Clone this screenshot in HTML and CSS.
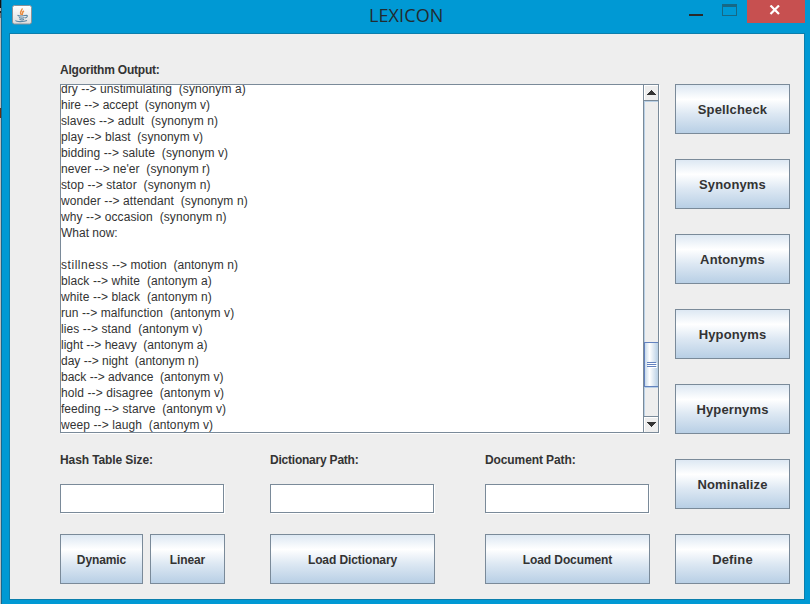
FILE: index.html
```html
<!DOCTYPE html>
<html lang="en">
<head>
<meta charset="utf-8">
<title>LEXICON</title>
<link rel="stylesheet" href="styles.css">
</head>
<body>
<div class="window">
  <header class="titlebar">
    <svg class="app-icon" width="20" height="20" viewBox="0 0 20 20">
      <defs><linearGradient id="tile" x2="0" y2="1"><stop stop-color="#fff"/><stop offset="1" stop-color="#dcdcdc"/></linearGradient></defs>
      <rect x=".5" y=".5" width="19" height="18.500" rx="2" fill="url(#tile)" stroke="#8a9298"/>
      <path d="M10 3.300C11 5 6.500 6.500 9.500 10M12 6C9 7.500 11.500 8.500 10 10" fill="none" stroke="#e78a3e" stroke-width="1.400"/>
      <path d="M5.500 10.300C7 11.300 11 11.300 13.500 10.300M7 12.400C8.500 13.200 11 13.200 12.500 12.400M7.500 14.300C9 15 11 15 12 14.300M13.500 10.500C16.500 9.800 15.500 12.500 13 13M4 15.300C3 17 12 17 15 15.500" fill="none" stroke="#5b87a5" stroke-width="1.100"/>
    </svg>
    <h1 class="title">LEXICON</h1>
    <div class="controls">
      <span class="minimize"></span>
      <span class="maximize"></span>
      <span class="close"><svg width="12" height="10" viewBox="0 0 12 10"><path d="M1.500 .5 10 9M10 .5 1.500 9" stroke="#fff" stroke-width="2.200"/></svg></span>
    </div>
  </header>
  <main class="client">
    <section class="left">
      <div class="label tight">Algorithm Output:</div>
      <div class="output">
        <div class="lines">
          <p class="wide">dry --&gt; unstimulating  (synonym a)</p>
          <p>hire --&gt; accept  (synonym v)</p>
          <p class="wide">slaves --&gt; adult  (synonym n)</p>
          <p class="mid">play --&gt; blast  (synonym v)</p>
          <p class="wide">bidding --&gt; salute  (synonym v)</p>
          <p class="mid">never --&gt; ne'er  (synonym r)</p>
          <p class="wide">stop --&gt; stator  (synonym n)</p>
          <p class="wide">wonder --&gt; attendant  (synonym n)</p>
          <p class="wide">why --&gt; occasion  (synonym n)</p>
          <p>What now:</p>
          <p></p>
          <p class="mid"><span class="stretch">stillness</span> --&gt; motion  (antonym n)</p>
          <p class="wide">black --&gt; white  (antonym a)</p>
          <p class="wide">white --&gt; black  (antonym n)</p>
          <p class="wide">run --&gt; malfunction  (antonym v)</p>
          <p class="wide">lies --&gt; stand  (antonym v)</p>
          <p>light --&gt; heavy  (antonym a)</p>
          <p>day --&gt; night  (antonym n)</p>
          <p>back --&gt; advance  (antonym v)</p>
          <p class="wide">hold --&gt; disagree  (antonym v)</p>
          <p class="mid">feeding --&gt; starve  (antonym v)</p>
          <p class="wide">weep --&gt; laugh  (antonym v)</p>
        </div>
        <div class="scrollbar">
          <div class="arrow up"><svg width="10" height="5" shape-rendering="crispEdges"><path d="M0 5 5 0 10 5Z" fill="#333"/></svg></div>
          <div class="track"><div class="thumb"><i></i><i></i><i></i></div></div>
          <div class="arrow down"><svg width="10" height="5" shape-rendering="crispEdges"><path d="M0 0 5 5 10 0Z" fill="#333"/></svg></div>
        </div>
      </div>
      <div class="form">
        <div class="group">
          <div class="label snug">Hash Table Size:</div>
          <input class="field" type="text" aria-label="Hash Table Size">
          <div class="pair"><button class="dynamic">Dynamic</button><button class="linear">Linear</button></div>
        </div>
        <div class="group">
          <div class="label tight">Dictionary Path:</div>
          <input class="field" type="text" aria-label="Dictionary Path">
          <button>Load Dictionary</button>
        </div>
        <div class="group">
          <div class="label snug">Document Path:</div>
          <input class="field" type="text" aria-label="Document Path">
          <button>Load Document</button>
        </div>
      </div>
    </section>
    <nav class="actions">
      <button>Spellcheck</button>
      <button>Synonyms</button>
      <button>Antonyms</button>
      <button>Hyponyms</button>
      <button>Hypernyms</button>
      <button>Nominalize</button>
      <button>Define</button>
    </nav>
  </main>
</div>
</body>
</html>
```
FILE: styles.css
```css
* { box-sizing: border-box; }
body { margin: 0; overflow: hidden; font: 12px/16px "Liberation Sans", Arial, sans-serif; color: #333; }
.window {
  width: 810px; height: 604px; padding: 0 5px 4px 9px;
  background: linear-gradient(#111 0 8px, #aaa 8px 11px, #222 11px 13px, #777 13px 18px, #bbb 18px 108px, #6b3010 108px 118px, #bbb 118px) 0 0 / 1px 100% no-repeat, linear-gradient(#17688f, #17688f) 1px 0 / 1px 100% no-repeat, #0099d4;
}
.titlebar { display: flex; height: 33px; padding-left: 3px; }
.app-icon { margin-top: 5px; }
.title { margin: 3px 0 0 337px; font: 18px/24px "Open Sans", "Noto Sans", sans-serif; color: #222b30; width: 75px; white-space: nowrap; letter-spacing: .1px; }
.controls { display: flex; margin-left: 248px; }
.minimize { width: 14px; height: 2px; margin: 14px 0 0 -3px; background: #2a2a2a; flex: none; }
.maximize { width: 15px; height: 12px; margin: 4px 0 0 19px; border: 1px solid #176884; border-top-width: 3px; flex: none; }
.close { display: flex; width: 58px; height: 23px; margin-left: 10px; padding: 5px 0 0 22px; background: #c75050; flex: none; }
.client { display: flex; gap: 15px; height: 567px; border: 1px solid #0b7eac; background: #eee; padding: 28px 14px 0 50px; }
.left { width: 600px; }
.label { height: 16px; font-weight: bold; white-space: nowrap; }
.tight { letter-spacing: -.22px; }
.snug { letter-spacing: -.1px; }
.output { display: flex; margin-top: 6px; background: #fff; border: 1px solid #7a8a99; width: 599px; height: 349px; box-shadow: 1px 1px #fff; }
.lines { flex: 1; height: 347px; overflow: hidden; }
.lines p { height: 16px; margin: 0; white-space: pre; }
.lines p:first-child { margin-top: -4px; }
.wide { letter-spacing: .09px; }
.mid { letter-spacing: .04px; }
.stretch { letter-spacing: .55px; }
.scrollbar { display: flex; flex-direction: column; width: 15px; border-left: 1px solid #7a8a99; background: #eee; }
.arrow { display: flex; justify-content: center; height: 16px; flex: none; }
.up { border-bottom: 1px solid #7a8a99; padding-top: 5px; box-shadow: inset 1px 1px #fff; }
.down { border-top: 1px solid #7a8a99; padding-top: 5px; box-shadow: inset 1px 1px #fff; }
.track { flex: 1; padding-top: 241px; box-shadow: inset 1px 1px #b8cfe5; }
.thumb { display: flex; flex-direction: column; align-items: center; gap: 1px; height: 45px; padding-top: 19px; border: solid #6382bf; border-width: 1px 0 1px 1px; background: linear-gradient(90deg, #c8daeb, #fff 35%, #b8cfe5); box-shadow: 0 1px #b8cfe5; }
.thumb i { width: 9px; height: 1px; background: #6382bf; box-shadow: 1px 1px #fff; }
.form { display: flex; margin-top: 19px; }
.group { width: 165px; margin-right: 45px; flex: none; }
.group:nth-child(2) { margin-right: 50px; }
.group:last-child { margin-right: 0; }
.field { display: block; width: 164px; height: 29px; margin: 16px 0 21px; border: 1px solid #7a8a99; border-radius: 0; background: #fff; box-shadow: 1px 1px #fff; }
button { display: block; width: 165px; height: 50px; padding: 2px 0 0; border: 1px solid #7a8a99; border-radius: 0; background: linear-gradient(#dde8f3, #fff 30%, #dde8f3 60%, #b8cfe5); color: #333; font: bold 12px/16px "Liberation Sans", Arial, sans-serif; letter-spacing: -.1px; }
.pair { display: flex; justify-content: space-between; }
.dynamic { width: 83px; }
.linear { width: 75px; }
.actions { display: flex; flex-direction: column; gap: 25px; padding-top: 22px; }
.actions button { width: 115px; font-size: 13px; letter-spacing: .15px; }
```
